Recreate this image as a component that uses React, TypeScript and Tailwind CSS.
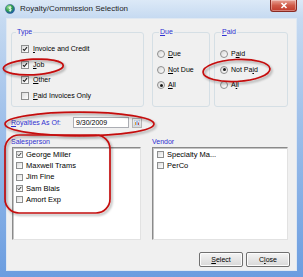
import React from "react";
import clsx from "clsx";

function U({ children }: { children: React.ReactNode }) {
  return <span className="underline underline-offset-[1px]">{children}</span>;
}

function Box({ on, small }: { on?: boolean; small?: boolean }) {
  return (
    <span
      className={clsx(
        "flex shrink-0 items-center justify-center border border-[#8e8f8f] bg-gradient-to-br from-[#dcdcdc] to-white",
        small ? "h-[7px] w-[7px]" : "h-[8px] w-[8px]"
      )}
    >
      {on && (
        <svg viewBox="0 0 8 8" className="h-full w-full">
          <path d="M1.3 4.1 3.1 6 6.7 1.5" fill="none" stroke="#222" strokeWidth="1.5" />
        </svg>
      )}
    </span>
  );
}

function Radio({ on }: { on?: boolean }) {
  return (
    <span className="flex h-[8px] w-[8px] shrink-0 items-center justify-center rounded-full border border-[#8e8f8f] bg-gradient-to-br from-[#d8d8d8] to-white">
      {on && <span className="h-[3px] w-[3px] rounded-full bg-[#1b1b1b]" />}
    </span>
  );
}

const people = [
  { name: "George Miller", on: true },
  { name: "Maxwell Trams", on: false },
  { name: "Jim Fine", on: false },
  { name: "Sam Blais", on: true },
  { name: "Amort Exp", on: false },
];

export default function App() {
  return (
    <div className="relative flex h-[277px] w-[303px] flex-col overflow-hidden bg-[linear-gradient(to_bottom,#dce9f7_0px,#c6daf1_18px,#9fc0ea_120px,#6b9de0_277px)] font-['Liberation_Sans',Arial,sans-serif] text-[7px] text-black">
      {/* title bar */}
      <div className="flex h-[18px] shrink-0 items-start">
        <svg viewBox="0 0 10 10" className="ml-[5px] mt-[4px] h-[10px] w-[10px]">
          <defs>
            <radialGradient id="ic" cx="35%" cy="30%" r="70%">
              <stop offset="0" stopColor="#9fe39a" />
              <stop offset="0.55" stopColor="#2f9e4a" />
              <stop offset="1" stopColor="#1d5fa8" />
            </radialGradient>
          </defs>
          <circle cx="5" cy="5" r="4.6" fill="url(#ic)" stroke="#25558a" strokeWidth="0.5" />
          <path d="M6.4 3.4C5.9 2.9 4 2.8 4 3.9c0 1.1 2.4.7 2.4 1.9 0 1.1-2 1-2.6.5M5.2 2.3v5.4" fill="none" stroke="#fff" strokeWidth="0.8" />
        </svg>
        <span className="ml-[5px] mt-[4px] text-[8px] leading-[10px] text-[#1e1e1e]">Royalty/Commission Selection</span>
        <div className="ml-auto mr-[6px] flex h-[12px] w-[27px] items-center justify-center rounded-b-[3px] border border-t-0 border-[#8a2a22] bg-gradient-to-b from-[#e8a397] via-[#d05a48] to-[#c0382a] shadow-[inset_0_0_0_1px_rgba(255,255,255,0.35)]">
          <svg viewBox="0 0 8 7" className="h-[7px] w-[8px]">
            <path d="M1.5 1 6.5 6M6.5 1 1.5 6" stroke="#fff" strokeWidth="1.6" />
          </svg>
        </div>
      </div>

      {/* client area */}
      <div className="mx-[6px] mb-[6px] flex-1 border border-[#dfe8f2] bg-[#f0f0f0] pl-[4px] pt-[9px]">
        <div className="flex items-start">
          <fieldset className="h-[79px] w-[133px] rounded-[3px] border border-[#d5dfe5]">
            <legend className="ml-[4px] px-[1px] leading-[8px] text-[#3030d0]">Type</legend>
            <div className="flex flex-col gap-[7.5px] pl-[9px] pt-[9px]">
              {[
                [<><U>I</U>nvoice and Credit</>, true],
                [<><U>J</U>ob</>, true],
                [<><U>O</U>ther</>, true],
                [<><U>P</U>aid Invoices Only</>, false],
              ].map(([label, on], i) => (
                <div key={i} className="flex h-[8px] items-center gap-[4px]">
                  <Box on={on as boolean} />
                  <span className="leading-[8px]">{label as React.ReactNode}</span>
                </div>
              ))}
            </div>
          </fieldset>

          <fieldset className="ml-[8px] h-[79px] w-[58px] rounded-[3px] border border-[#d5dfe5]">
            <legend className="ml-[6px] px-[1px] leading-[8px] text-[#3030d0]">
              <U>D</U>ue
            </legend>
            <div className="flex flex-col gap-[7.5px] pl-[4px] pt-[14px]">
              <div className="flex h-[8px] items-center gap-[3px]">
                <Radio />
                <span className="leading-[8px]"><U>D</U>ue</span>
              </div>
              <div className="flex h-[8px] items-center gap-[3px]">
                <Radio />
                <span className="leading-[8px]"><U>N</U>ot Due</span>
              </div>
              <div className="flex h-[8px] items-center gap-[3px]">
                <Radio on />
                <span className="leading-[8px]"><U>A</U>ll</span>
              </div>
            </div>
          </fieldset>

          <fieldset className="ml-[4px] h-[79px] w-[74px] rounded-[3px] border border-[#d5dfe5]">
            <legend className="ml-[6px] px-[1px] leading-[8px] text-[#3030d0]">
              <U>P</U>aid
            </legend>
            <div className="flex flex-col gap-[7.5px] pl-[5px] pt-[14px]">
              <div className="flex h-[8px] items-center gap-[3px]">
                <Radio />
                <span className="leading-[8px]">P<U>a</U>id</span>
              </div>
              <div className="flex h-[8px] items-center gap-[3px]">
                <Radio on />
                <span className="leading-[8px]">Not Pa<U>i</U>d</span>
              </div>
              <div className="flex h-[8px] items-center gap-[3px]">
                <Radio />
                <span className="leading-[8px]">A<U>l</U>l</span>
              </div>
            </div>
          </fieldset>
        </div>

        {/* date row */}
        <div className="mt-[10px] flex h-[11px] items-center">
          <span className="w-[62px] leading-[8px] text-[#3030d0]">
            <U>R</U>oyalties As Of:
          </span>
          <div className="flex h-[11px] w-[56px] items-center border border-[#abadb3] bg-white pl-[2px] leading-[8px]">
            9/30/2009
          </div>
          <div className="ml-[3px] flex h-[10px] w-[10px] items-center justify-center border border-[#b5b5b5] bg-gradient-to-b from-[#f4f4f4] to-[#dadada]">
            <svg viewBox="0 0 6 6" className="h-[6px] w-[6px]">
              <rect x="0" y="0" width="6" height="6" fill="#e8eef8" stroke="#8da2c0" strokeWidth="0.5" />
              <rect x="1" y="2" width="1" height="3" fill="#e0a030" />
              <rect x="2.5" y="1" width="1" height="4" fill="#5a8ad8" />
              <rect x="4" y="2.5" width="1" height="2.5" fill="#c0504d" />
            </svg>
          </div>
        </div>

        {/* lists */}
        <div className="mt-[10px] flex">
          <div className="w-[130px]">
            <div className="h-[8px] leading-[8px] text-[#3030d0]">Salesperson</div>
            <div className="ml-[1px] mt-[1px] h-[93px] w-[129px] border border-b-[#e2e2e2] border-l-[#8a8a8a] border-r-[#e2e2e2] border-t-[#8a8a8a] bg-white pl-[3px] pt-[1px] shadow-[inset_1px_1px_0_#c4c4c4]">
              {people.map((p) => (
                <div key={p.name} className="flex h-[11.3px] items-center gap-[3px]">
                  <Box on={p.on} small />
                  <span className="text-[7.5px] leading-[8px]">{p.name}</span>
                </div>
              ))}
            </div>
          </div>
          <div className="ml-[11px] w-[136px]">
            <div className="h-[8px] leading-[8px] text-[#3030d0]">Vendor</div>
            <div className="mt-[1px] h-[93px] w-[136px] border border-b-[#e2e2e2] border-l-[#8a8a8a] border-r-[#e2e2e2] border-t-[#8a8a8a] bg-white pl-[4px] pt-[1px] shadow-[inset_1px_1px_0_#c4c4c4]">
              {["Specialty Ma...", "PerCo"].map((v) => (
                <div key={v} className="flex h-[11.3px] items-center gap-[3px]">
                  <Box small />
                  <span className="text-[7.5px] leading-[8px]">{v}</span>
                </div>
              ))}
            </div>
          </div>
        </div>

        {/* buttons */}
        <div className="mr-[6px] mt-[12px] flex justify-end gap-[3px]">
          <button className="flex h-[15px] w-[44px] items-center justify-center rounded-[2px] border border-[#707070] bg-gradient-to-b from-[#f4f4f4] to-[#d8d8d8] leading-[8px] shadow-[inset_0_0_0_1px_#fcfcfc]">
            <span><U>S</U>elect</span>
          </button>
          <button className="flex h-[15px] w-[44px] items-center justify-center rounded-[2px] border border-[#707070] bg-gradient-to-b from-[#f4f4f4] to-[#d8d8d8] leading-[8px] shadow-[inset_0_0_0_1px_#fcfcfc]">
            <span>C<U>l</U>ose</span>
          </button>
        </div>
      </div>

      {/* red annotations drawn over the screenshot */}
      <svg className="pointer-events-none absolute inset-0" width="303" height="277" viewBox="0 0 303 277">
        <defs>
          <filter id="sh" x="-20%" y="-40%" width="140%" height="180%">
            <feDropShadow dx="1.5" dy="1.8" stdDeviation="1" floodColor="#000" floodOpacity="0.35" />
          </filter>
        </defs>
        <g fill="none" stroke="#c40a0a" strokeWidth="1.7" filter="url(#sh)">
          <ellipse cx="33.3" cy="67" rx="30" ry="7.8" transform="rotate(-3 33.3 67)" />
          <ellipse cx="236.5" cy="70.5" rx="33.5" ry="11" transform="rotate(-3 236.5 70.5)" />
          <ellipse cx="79.5" cy="124" rx="74.5" ry="11.8" />
          <rect x="5" y="135" width="105" height="78" rx="14" />
        </g>
      </svg>
    </div>
  );
}
